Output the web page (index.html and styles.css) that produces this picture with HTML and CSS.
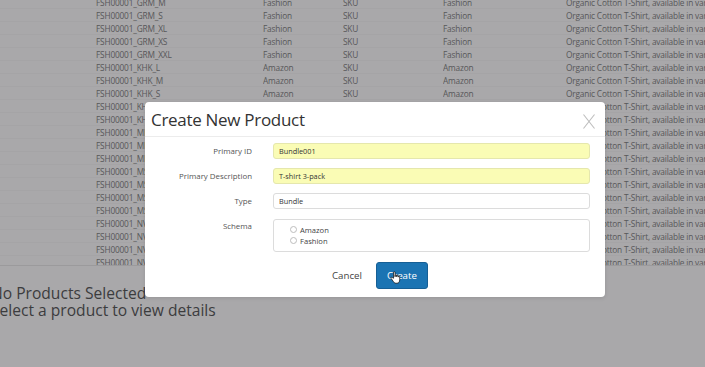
FILE: index.html
```html
<!DOCTYPE html>
<html lang="en">
<head>
<meta charset="utf-8">
<title>Create New Product</title>
<link rel="stylesheet" href="styles.css">
</head>
<body>
<div class="page">
  <div class="table">
    <div class="row"><span>FSH00001_GRM_M</span><span>Fashion</span><span>SKU</span><span>Fashion</span><span>Organic Cotton T-Shirt, available in various sizes</span></div>
    <div class="row"><span>FSH00001_GRM_S</span><span>Fashion</span><span>SKU</span><span>Fashion</span><span>Organic Cotton T-Shirt, available in various sizes</span></div>
    <div class="row"><span>FSH00001_GRM_XL</span><span>Fashion</span><span>SKU</span><span>Fashion</span><span>Organic Cotton T-Shirt, available in various sizes</span></div>
    <div class="row"><span>FSH00001_GRM_XS</span><span>Fashion</span><span>SKU</span><span>Fashion</span><span>Organic Cotton T-Shirt, available in various sizes</span></div>
    <div class="row"><span>FSH00001_GRM_XXL</span><span>Fashion</span><span>SKU</span><span>Fashion</span><span>Organic Cotton T-Shirt, available in various sizes</span></div>
    <div class="row"><span>FSH00001_KHK_L</span><span>Amazon</span><span>SKU</span><span>Amazon</span><span>Organic Cotton T-Shirt, available in various sizes</span></div>
    <div class="row"><span>FSH00001_KHK_M</span><span>Amazon</span><span>SKU</span><span>Amazon</span><span>Organic Cotton T-Shirt, available in various sizes</span></div>
    <div class="row"><span>FSH00001_KHK_S</span><span>Amazon</span><span>SKU</span><span>Amazon</span><span>Organic Cotton T-Shirt, available in various sizes</span></div>
    <div class="row"><span>FSH00001_KHK_XL</span><span>Amazon</span><span>SKU</span><span>Amazon</span><span>Organic Cotton T-Shirt, available in various sizes</span></div>
    <div class="row"><span>FSH00001_KHK_XS</span><span>Amazon</span><span>SKU</span><span>Amazon</span><span>Organic Cotton T-Shirt, available in various sizes</span></div>
    <div class="row"><span>FSH00001_MIL_L</span><span>Fashion</span><span>SKU</span><span>Fashion</span><span>Organic Cotton T-Shirt, available in various sizes</span></div>
    <div class="row"><span>FSH00001_MIL_M</span><span>Fashion</span><span>SKU</span><span>Fashion</span><span>Organic Cotton T-Shirt, available in various sizes</span></div>
    <div class="row"><span>FSH00001_MIL_S</span><span>Fashion</span><span>SKU</span><span>Fashion</span><span>Organic Cotton T-Shirt, available in various sizes</span></div>
    <div class="row"><span>FSH00001_MST_L</span><span>Fashion</span><span>SKU</span><span>Fashion</span><span>Organic Cotton T-Shirt, available in various sizes</span></div>
    <div class="row"><span>FSH00001_MST_M</span><span>Fashion</span><span>SKU</span><span>Fashion</span><span>Organic Cotton T-Shirt, available in various sizes</span></div>
    <div class="row"><span>FSH00001_MST_S</span><span>Fashion</span><span>SKU</span><span>Fashion</span><span>Organic Cotton T-Shirt, available in various sizes</span></div>
    <div class="row"><span>FSH00001_MST_XL</span><span>Fashion</span><span>SKU</span><span>Fashion</span><span>Organic Cotton T-Shirt, available in various sizes</span></div>
    <div class="row"><span>FSH00001_NVY_L</span><span>Amazon</span><span>SKU</span><span>Amazon</span><span>Organic Cotton T-Shirt, available in various sizes</span></div>
    <div class="row"><span>FSH00001_NVY_M</span><span>Amazon</span><span>SKU</span><span>Amazon</span><span>Organic Cotton T-Shirt, available in various sizes</span></div>
    <div class="row"><span>FSH00001_NVY_S</span><span>Amazon</span><span>SKU</span><span>Amazon</span><span>Organic Cotton T-Shirt, available in various sizes</span></div>
    <div class="row"><span>FSH00001_NVY_XL</span><span>Amazon</span><span>SKU</span><span>Amazon</span><span>Organic Cotton T-Shirt, available in various sizes</span></div>
  </div>
  <div class="details">
    <div>No Products Selected</div>
    <div>Select a product to view details</div>
  </div>
</div>

<div class="modal">
  <div class="modal-header">
    <h1 class="modal-title">Create New Product</h1>
    <svg class="close" width="12" height="15" viewBox="0 0 12 15" aria-label="Close">
      <line x1="0.5" y1="0.5" x2="11.5" y2="14.5" />
      <line x1="11.5" y1="0.5" x2="0.5" y2="14.5" />
    </svg>
  </div>
  <div class="form">
    <div class="label">Primary ID</div>
    <div class="input filled">Bundle001</div>
    <div class="label">Primary Description</div>
    <div class="input filled">T-shirt 3-pack</div>
    <div class="label">Type</div>
    <div class="input">Bundle</div>
    <div class="label">Schema</div>
    <div class="schema">
      <div class="radio-row"><span class="radio"></span>Amazon</div>
      <div class="radio-row"><span class="radio"></span>Fashion</div>
    </div>
  </div>
  <div class="footer">
    <span class="cancel">Cancel</span>
    <span class="btn">Create</span>
  </div>
  <svg class="cursor" width="11" height="13" viewBox="0 0 14 17">
    <path d="M4.5 9.5 V2 a1 1 0 0 1 2 0 V7.5 V6 a1 1 0 0 1 2 0 V7.5 V6.5 a1 1 0 0 1 2 0 V8 V7.5 a1 1 0 0 1 2 0 V11.5 c0 2.5 -1.2 4.5 -3.5 4.5 H7.5 c-1.6 0 -2.6 -1 -3.6 -2.6 L1.3 9.8 a1 1 0 0 1 1.6 -1.2 Z" />
  </svg>
</div>
</body>
</html>
```

FILE: styles.css
```css
html, body {
  margin: 0;
  padding: 0;
}

body {
  width: 705px;
  height: 367px;
  overflow: hidden;
  position: relative;
  background: #a9a8aa;
  font-family: "Open Sans", "Liberation Sans", sans-serif;
}

.page {
  width: 705px;
}

.table {
  margin-top: -4px;
  height: 270px;
  box-sizing: border-box;
  overflow: hidden;
  border-bottom: 1px solid #9b9a9c;
}

.row {
  display: grid;
  grid-template-columns: 167px 80px 100px 123px 1fr;
  padding-left: 96px;
  height: 13px;
  line-height: 13px;
  font-size: 8.3px;
  letter-spacing: -0.18px;
  color: #575759;
  white-space: nowrap;
  box-sizing: border-box;
  border-bottom: 1px solid rgba(0, 0, 0, 0.025);
}

.row span {
  overflow: hidden;
}

.details {
  margin-top: 19px;
  margin-left: -9px;
  font-size: 15.6px;
  line-height: 17px;
  color: #3c3c3e;
  white-space: nowrap;
}

.modal {
  position: absolute;
  left: 145px;
  top: 102px;
  width: 460px;
  background: #fff;
  border-radius: 4px;
  box-shadow: 0 1px 4px rgba(0, 0, 0, 0.12);
}

.modal-header {
  height: 34px;
  display: flex;
  align-items: center;
  justify-content: space-between;
  padding: 0 10px 0 6px;
  border-bottom: 1px solid #ececec;
}

.modal-title {
  margin: 0;
  font-weight: 400;
  font-size: 17px;
  letter-spacing: -0.3px;
  color: #333;
  line-height: 20px;
  padding-top: 2px;
}

.close {
  stroke: #bdbdbd;
  stroke-width: 1.1;
  fill: none;
  margin-top: 4px;
}

.form {
  display: grid;
  grid-template-columns: 107px 317px;
  column-gap: 21px;
  row-gap: 9px;
  padding: 6px 15px 0 0;
}

.label {
  text-align: right;
  font-size: 7.9px;
  line-height: 16px;
  color: #555;
  white-space: nowrap;
}

.input {
  height: 16px;
  box-sizing: border-box;
  border: 1px solid #dcdcdc;
  border-radius: 3px;
  padding: 0 5px;
  font-size: 7.3px;
  line-height: 14px;
  color: #333;
  background: #fff;
}

.input.filled {
  background: #fafcb5;
  border-color: #e5e7ad;
}

.schema {
  margin-top: 1px;
  height: 33px;
  box-sizing: border-box;
  border: 1px solid #dcdcdc;
  border-radius: 3px;
  padding: 4px 0 0 16px;
}

.radio-row {
  display: flex;
  align-items: center;
  gap: 3px;
  height: 11px;
  font-size: 7.6px;
  color: #444;
}

.radio {
  width: 7px;
  height: 7px;
  box-sizing: border-box;
  border: 1px solid #bdbdbd;
  border-radius: 50%;
  background: #fff;
}

.footer {
  display: flex;
  justify-content: center;
  align-items: center;
  gap: 14px;
  margin-top: 10px;
  padding: 0 0 8px 10px;
}

.cancel {
  font-size: 9.7px;
  color: #444;
}

.btn {
  width: 52px;
  height: 27px;
  box-sizing: border-box;
  display: flex;
  align-items: center;
  justify-content: center;
  background: #1b74b3;
  border: 1px solid #165f95;
  border-radius: 3px;
  color: #fff;
  font-size: 9.7px;
}

.cursor {
  position: absolute;
  left: 245px;
  top: 169px;
  fill: #fff;
  stroke: #111;
  stroke-width: 1;
  stroke-linejoin: round;
}
```
